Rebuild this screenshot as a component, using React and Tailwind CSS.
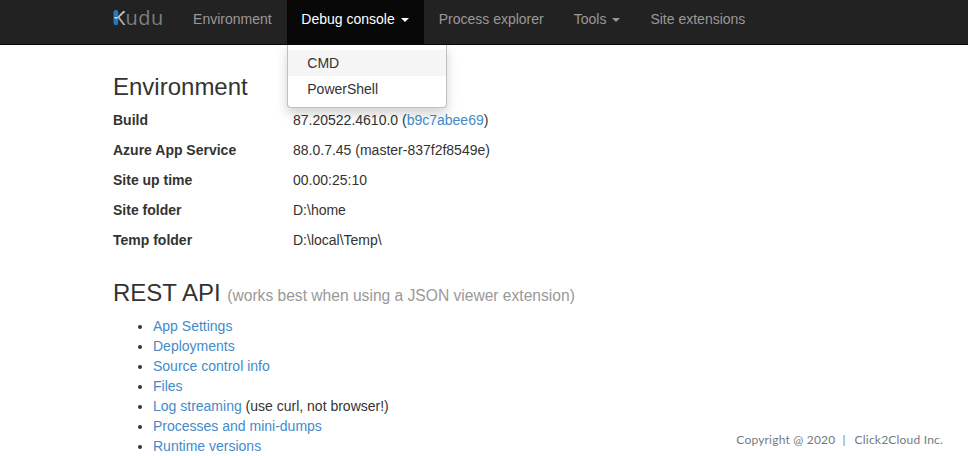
const details = [
  ["Build", <>87.20522.4610.0 (<a className="text-[#428bca]">b9c7abee69</a>)</>],
  ["Azure App Service", "88.0.7.45 (master-837f2f8549e)"],
  ["Site up time", "00.00:25:10"],
  ["Site folder", "D:\\home"],
  ["Temp folder", "D:\\local\\Temp\\"],
];

const links = [
  ["App Settings"],
  ["Deployments"],
  ["Source control info"],
  ["Files"],
  ["Log streaming", " (use curl, not browser!)"],
  ["Processes and mini-dumps"],
  ["Runtime versions"],
];

function Caret() {
  return (
    <span className="ml-1.5 inline-block border-x-4 border-t-4 border-x-transparent border-t-current align-middle" />
  );
}

function Logo() {
  return (
    <div className="relative ml-[113px] h-full w-[65.1px] shrink-0">
      <div className="absolute top-[5px] left-0 flex font-['Open_Sans'] text-[20px] leading-[26px] text-[#7c7e82]">
        <span className="w-[12.6px] text-[#b4b7ba]">K</span>
        <span className="tracking-[0.4px]">udu</span>
      </div>
      <svg className="absolute top-[10px] left-0" width="14" height="15" viewBox="0 0 14 15">
        <path d="M5 7.4L11.6 1.4" stroke="#c9cbce" strokeWidth="1.6" strokeDasharray="2.4 0.7" />
        <rect x="0.5" y="0" width="4.7" height="15" rx="2.3" fill="#2878c0" />
        <path d="M1.4 7.8h3.4" stroke="#d8e4ee" strokeWidth="1.4" />
      </svg>
    </div>
  );
}

function Menu() {
  return (
    <div className="absolute top-full left-0 z-10 w-40 rounded-b border border-t-0 border-[#bfbfbf] bg-white bg-clip-padding pt-[5px] pb-[5px] leading-5 text-[#333] shadow-[0_6px_12px_rgba(0,0,0,0.175)]">
      <div className="bg-[#f5f5f5] px-[19.6px] py-[3px]">CMD</div>
      <div className="px-[19.6px] py-[3px]">PowerShell</div>
    </div>
  );
}

export default function App() {
  return (
    <div className="flex h-[456px] w-full flex-col overflow-hidden bg-white font-['Liberation_Sans',Arial,sans-serif] text-sm leading-5 text-[#333]">
      <nav className="flex h-[45px] shrink-0 border-b border-[#080808] bg-[#222] text-[#999]">
        <Logo />
        <a className="px-[15px] pt-[9px]">Environment</a>
        <div className="relative -mb-px w-[137px] bg-[#080808] pt-[9px] pl-[14.6px] text-white">
          Debug console
          <Caret />
          <Menu />
        </div>
        <a className="px-[15px] pt-[9px]">Process explorer</a>
        <a className="px-[15px] pt-[9px]">
          Tools
          <Caret />
        </a>
        <a className="px-[15px] pt-[9px]">Site extensions</a>
      </nav>
      <div className="flex min-h-0 flex-1">
        <main className="flex-1 pt-[29px] pl-[113px]">
          <h3 className="text-2xl leading-[26px]">Environment</h3>
          <dl className="mt-[5px]">
            {details.map(([label, value]) => (
              <div key={label} className="flex h-[30px] items-center">
                <dt className="w-[180px] font-bold">{label}</dt>
                <dd>{value}</dd>
              </div>
            ))}
          </dl>
          <h3 className="mt-[25px] text-2xl leading-[26px]">
            REST API <small className="text-[15.6px] leading-none text-[#999]">(works best when using a JSON viewer extension)</small>
          </h3>
          <ul className="mt-[10px] list-disc pl-10">
            {links.map(([label, note]) => (
              <li key={label}>
                <a className="text-[#428bca]">{label}</a>
                {note}
              </li>
            ))}
          </ul>
        </main>
        <footer className="mr-[25px] mb-[6px] flex self-end font-['Lato'] text-[12px] tracking-[0.2px] text-[#737a86]">
          <span>Copyright @ 2020</span>
          <span className="ml-[7px]">|</span>
          <span className="ml-[9px]">Click2Cloud Inc.</span>
        </footer>
      </div>
    </div>
  );
}
